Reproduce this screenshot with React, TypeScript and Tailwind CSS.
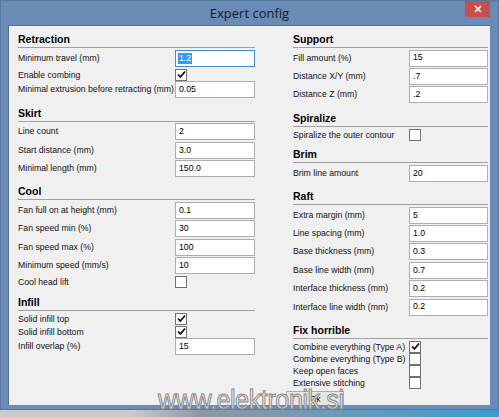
import React from 'react';

type Row =
  | { kind: 'input'; label: string; value: string; focused?: boolean }
  | { kind: 'check'; label: string; checked: boolean };

interface Section {
  title: string;
  checkH: string;
  rows: Row[];
}

const leftSections: Section[] = [
  {
    title: 'Retraction',
    checkH: 'h-[13.5px]',
    rows: [
      { kind: 'input', label: 'Minimum travel (mm)', value: '1.2', focused: true },
      { kind: 'check', label: 'Enable combing', checked: true },
      { kind: 'input', label: 'Minimal extrusion before retracting (mm)', value: '0.05' },
    ],
  },
  {
    title: 'Skirt',
    checkH: 'h-[13px]',
    rows: [
      { kind: 'input', label: 'Line count', value: '2' },
      { kind: 'input', label: 'Start distance (mm)', value: '3.0' },
      { kind: 'input', label: 'Minimal length (mm)', value: '150.0' },
    ],
  },
  {
    title: 'Cool',
    checkH: 'h-[13px]',
    rows: [
      { kind: 'input', label: 'Fan full on at height (mm)', value: '0.1' },
      { kind: 'input', label: 'Fan speed min (%)', value: '30' },
      { kind: 'input', label: 'Fan speed max (%)', value: '100' },
      { kind: 'input', label: 'Minimum speed (mm/s)', value: '10' },
      { kind: 'check', label: 'Cool head lift', checked: false },
    ],
  },
  {
    title: 'Infill',
    checkH: 'h-[13px]',
    rows: [
      { kind: 'check', label: 'Solid infill top', checked: true },
      { kind: 'check', label: 'Solid infill bottom', checked: true },
      { kind: 'input', label: 'Infill overlap (%)', value: '15' },
    ],
  },
];

const rightSections: Section[] = [
  {
    title: 'Support',
    checkH: 'h-[13px]',
    rows: [
      { kind: 'input', label: 'Fill amount (%)', value: '15' },
      { kind: 'input', label: 'Distance X/Y (mm)', value: '.7' },
      { kind: 'input', label: 'Distance Z (mm)', value: '.2' },
    ],
  },
  {
    title: 'Spiralize',
    checkH: 'h-[13px]',
    rows: [{ kind: 'check', label: 'Spiralize the outer contour', checked: false }],
  },
  {
    title: 'Brim',
    checkH: 'h-[13px]',
    rows: [{ kind: 'input', label: 'Brim line amount', value: '20' }],
  },
  {
    title: 'Raft',
    checkH: 'h-[13px]',
    rows: [
      { kind: 'input', label: 'Extra margin (mm)', value: '5' },
      { kind: 'input', label: 'Line spacing (mm)', value: '1.0' },
      { kind: 'input', label: 'Base thickness (mm)', value: '0.3' },
      { kind: 'input', label: 'Base line width (mm)', value: '0.7' },
      { kind: 'input', label: 'Interface thickness (mm)', value: '0.2' },
      { kind: 'input', label: 'Interface line width (mm)', value: '0.2' },
    ],
  },
  {
    title: 'Fix horrible',
    checkH: 'h-[12.3px]',
    rows: [
      { kind: 'check', label: 'Combine everything (Type A)', checked: true },
      { kind: 'check', label: 'Combine everything (Type B)', checked: false },
      { kind: 'check', label: 'Keep open faces', checked: false },
      { kind: 'check', label: 'Extensive stitching', checked: false },
    ],
  },
];

function CheckBox({ checked }: { checked: boolean }) {
  return (
    <div className="w-[12px] h-[12px] border border-[#707070] bg-white flex items-center justify-center">
      {checked && (
        <svg width="9" height="9" viewBox="0 0 9 9">
          <path d="M1 4.5 L3.4 7 L8 1.5" fill="none" stroke="#111" strokeWidth="1.8" />
        </svg>
      )}
    </div>
  );
}

function SettingsColumn({
  sections,
  labelW,
  inputW,
}: {
  sections: Section[];
  labelW: string;
  inputW: string;
}) {
  return (
    <div className="flex flex-col">
      {sections.map((section) => (
        <div key={section.title}>
          <div className="h-[22px] flex items-end pb-[2px] border-b border-[#a0a0a0]">
            <span className="text-[10.5px] leading-[12px] font-bold text-black">{section.title}</span>
          </div>
          <div className="pt-[1.5px]">
            {section.rows.map((row) =>
              row.kind === 'input' ? (
                <div key={row.label} className="flex items-start h-[18.4px]">
                  <div className={`${labelW} text-[8.7px] leading-[17px] text-[#111] whitespace-nowrap`}>
                    {row.label}
                  </div>
                  <div
                    className={`${inputW} h-[17px] bg-white border flex items-center px-[2px] text-[8.7px] text-black ${
                      row.focused ? 'border-[#3c8fdd]' : 'border-[#abadb3]'
                    }`}
                  >
                    {row.focused ? (
                      <span className="bg-[#3399ff] text-white px-[1px] leading-[11px]">{row.value}</span>
                    ) : (
                      <span className="pl-[1px]">{row.value}</span>
                    )}
                  </div>
                </div>
              ) : (
                <div key={row.label} className={`flex items-center ${section.checkH}`}>
                  <div className={`${labelW} text-[8.7px] leading-[12px] text-[#111] whitespace-nowrap`}>
                    {row.label}
                  </div>
                  <CheckBox checked={row.checked} />
                </div>
              )
            )}
          </div>
        </div>
      ))}
    </div>
  );
}

export default function App() {
  return (
    <div className="w-[499px] h-[417px] relative overflow-hidden font-['Liberation_Sans',Arial,sans-serif] bg-[#6a8bb6]">
      <div className="h-[410px] flex flex-col border border-[#58779f]">
        {/* title bar */}
        <div className="h-[24px] grid grid-cols-[1fr_auto_1fr] items-start">
          <div />
          <div className="pt-[4px] text-[13px] leading-[16px] text-[#1a1a1a] font-['Open_Sans','Liberation_Sans',sans-serif]">
            Expert config
          </div>
          <div className="flex justify-end pr-[8px]">
            <div className="w-[25px] h-[16px] bg-[#c7504f] flex items-center justify-center">
              <svg width="8" height="8" viewBox="0 0 8 8">
                <path d="M1 1 L7 7 M7 1 L1 7" stroke="#fff" strokeWidth="1.6" />
              </svg>
            </div>
          </div>
        </div>

        {/* client area */}
        <div className="ml-[7px] w-[482px] h-[380px] bg-[#f0f0f0] border-l border-t border-[#5a6f8c] overflow-hidden flex flex-col">
          <div className="flex pl-[9px] pr-[3px]">
            <div className="w-[237px]">
              <SettingsColumn sections={leftSections} labelW="w-[157px]" inputW="w-[80px]" />
            </div>
            <div className="w-[195px] ml-[38px]">
              <SettingsColumn sections={rightSections} labelW="w-[116px]" inputW="w-[79px]" />
            </div>
          </div>
          <div className="flex pl-[277px] pt-[1px]">
            <div className="w-[58px] h-[17px] border border-[#adadad] bg-[#e6e6e6] flex items-center justify-center text-[8.7px] text-[#111]">
              Ok
            </div>
          </div>
        </div>
      </div>

      {/* desktop strip below the window */}
      <div className="h-[7px] bg-[linear-gradient(90deg,#c9cbcd_0%,#c9cbcd_26%,#8d99a5_40%,#6c9bb9_66%,#3a9bd2_100%)]" />

      {/* watermark */}
      <div className="absolute left-[158px] top-[386px] text-[28px] leading-[28px] tracking-[-0.5px] text-[#e4e4e4]/90 [-webkit-text-stroke:1px_#8a8a8a] origin-left scale-x-[0.9] whitespace-nowrap pointer-events-none">
        www.elektronik.si
      </div>
    </div>
  );
}
